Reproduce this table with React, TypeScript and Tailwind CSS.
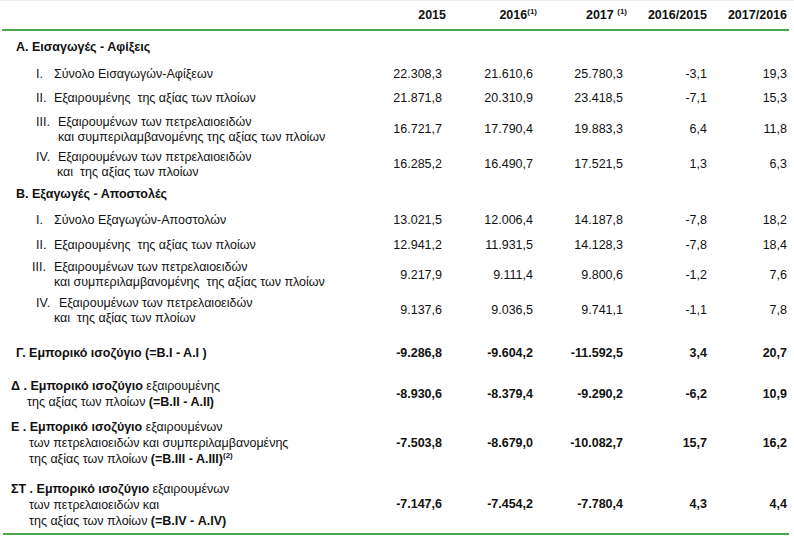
import type { ReactNode } from 'react';

type Row = {
  h: string;
  label: ReactNode;
  values?: string[];
  bold?: boolean;
};

const cols = 'grid grid-cols-[378px_66px_91px_90px_80px_80px] items-center';

function Item({ num, numW, pad, lines, line2Pad }: { num: string; numW: string; pad: string; lines: string[]; line2Pad: string }) {
  return (
    <div className={`${pad} leading-[15px]`}>
      <div className="flex whitespace-pre">
        <span className={numW}>{num}</span>
        <span>{lines[0]}</span>
      </div>
      {lines.slice(1).map((l) => (
        <div key={l} className={`${line2Pad} whitespace-pre`}>{l}</div>
      ))}
    </div>
  );
}

const rows: Row[] = [
  { h: 'h-[32px]', label: <div className="pl-[14px] font-bold">Α. Εισαγωγές - Αφίξεις</div> },
  {
    h: 'h-[22px]',
    label: <Item num="I." numW="w-[18px]" pad="pl-[34px]" lines={['Σύνολο Εισαγωγών-Αφίξεων']} line2Pad="" />,
    values: ['22.308,3', '21.610,6', '25.780,3', '-3,1', '19,3'],
  },
  {
    h: 'h-[26px]',
    label: <Item num="II." numW="w-[18px]" pad="pl-[34px]" lines={['Εξαιρουμένης  της αξίας των πλοίων']} line2Pad="" />,
    values: ['21.871,8', '20.310,9', '23.418,5', '-7,1', '15,3'],
  },
  {
    h: 'h-[37px]',
    label: (
      <Item
        num="III."
        numW="w-[22px]"
        pad="pl-[34px]"
        lines={['Εξαιρουμένων των πετρελαιοειδών', 'και συμπεριλαμβανομένης της αξίας των πλοίων']}
        line2Pad="pl-[22px]"
      />
    ),
    values: ['16.721,7', '17.790,4', '19.883,3', '6,4', '11,8'],
  },
  {
    h: 'h-[33px]',
    label: (
      <Item
        num="IV."
        numW="w-[22px]"
        pad="pl-[34px]"
        lines={['Εξαιρουμένων των πετρελαιοειδών', 'και  της αξίας των πλοίων']}
        line2Pad="pl-[21px]"
      />
    ),
    values: ['16.285,2', '16.490,7', '17.521,5', '1,3', '6,3'],
  },
  { h: 'h-[26px]', label: <div className="pl-[14px] font-bold">Β. Εξαγωγές - Αποστολές</div> },
  {
    h: 'h-[26px]',
    label: <Item num="I." numW="w-[18px]" pad="pl-[34px]" lines={['Σύνολο Εξαγωγών-Αποστολών']} line2Pad="" />,
    values: ['13.021,5', '12.006,4', '14.187,8', '-7,8', '18,2'],
  },
  {
    h: 'h-[24px]',
    label: <Item num="II." numW="w-[18px]" pad="pl-[34px]" lines={['Εξαιρουμένης  της αξίας των πλοίων']} line2Pad="" />,
    values: ['12.941,2', '11.931,5', '14.128,3', '-7,8', '18,4'],
  },
  {
    h: 'h-[36px]',
    label: (
      <Item
        num="III."
        numW="w-[22px]"
        pad="pl-[30px]"
        lines={['Εξαιρουμένων των πετρελαιοειδών', 'και συμπεριλαμβανομένης  της αξίας των πλοίων']}
        line2Pad="pl-[22px]"
      />
    ),
    values: ['9.217,9', '9.111,4', '9.800,6', '-1,2', '7,6'],
  },
  {
    h: 'h-[35px]',
    label: (
      <Item
        num="IV."
        numW="w-[23px]"
        pad="pl-[34px]"
        lines={['Εξαιρουμένων των πετρελαιοειδών', 'και  της αξίας των πλοίων']}
        line2Pad="pl-[18px]"
      />
    ),
    values: ['9.137,6', '9.036,5', '9.741,1', '-1,1', '7,8'],
  },
  {
    h: 'h-[50px]',
    bold: true,
    label: <div className="pl-[14px] font-bold whitespace-pre">Γ. Εμπορικό ισοζύγιο (=Β.Ι - Α.Ι )</div>,
    values: ['-9.286,8', '-9.604,2', '-11.592,5', '3,4', '20,7'],
  },
  {
    h: 'h-[32px]',
    bold: true,
    label: (
      <div className="pl-[9px] leading-[16px]">
        <div>
          <span className="font-bold">Δ . Εμπορικό ισοζύγιο</span> εξαιρουμένης
        </div>
        <div className="pl-[16px]">
          της αξίας των πλοίων <span className="font-bold">(=Β.ΙΙ - Α.ΙΙ)</span>
        </div>
      </div>
    ),
    values: ['-8.930,6', '-8.379,4', '-9.290,2', '-6,2', '10,9'],
  },
  {
    h: 'h-[66px]',
    bold: true,
    label: (
      <div className="pl-[9px] leading-[16px]">
        <div>
          <span className="font-bold">Ε . Εμπορικό ισοζύγιο</span> εξαιρουμένων
        </div>
        <div className="pl-[18px]">των πετρελαιοειδών και συμπεριλαμβανομένης</div>
        <div className="pl-[18px]">
          της αξίας των πλοίων <span className="font-bold">(=Β.ΙΙΙ - Α.ΙΙΙ)</span>
          <sup className="font-bold text-[8px] -top-[5px]">(2)</sup>
        </div>
      </div>
    ),
    values: ['-7.503,8', '-8.679,0', '-10.082,7', '15,7', '16,2'],
  },
  {
    h: 'h-[57px]',
    bold: true,
    label: (
      <div className="pl-[9px] leading-[16px]">
        <div>
          <span className="font-bold">ΣΤ . Εμπορικό ισοζύγιο</span> εξαιρουμένων
        </div>
        <div className="pl-[18px]">των πετρελαιοειδών και</div>
        <div className="pl-[18px]">
          της αξίας των πλοίων <span className="font-bold">(=Β.ΙV - Α.ΙV)</span>
        </div>
      </div>
    ),
    values: ['-7.147,6', '-7.454,2', '-7.780,4', '4,3', '4,4'],
  },
];

export default function App() {
  return (
    <div className="w-[794px] h-[544px] bg-white text-[#111] text-[12.5px] font-['Liberation_Sans',Arial,sans-serif] overflow-hidden">
      <div className="h-[1px] bg-[#f1f1f1]" />
      <div className="ml-[2px] w-[785px]">
        {/* Header */}
        <div className={`${cols} h-[28px] font-bold`}>
          <div />
          <div className="text-right">2015</div>
          <div className="text-right">
            2016<sup className="text-[8px] -top-[5px]">(1)</sup>
          </div>
          <div className="text-right">
            2017 <sup className="text-[8px] -top-[5px]">(1)</sup>
          </div>
          <div className="text-right">2016/2015</div>
          <div className="text-right">2017/2016</div>
        </div>
      </div>
      <div className="ml-[2px] w-[787px] h-[2px] bg-[#4fa84b]" />
      <div className="ml-[2px] w-[785px]">
        {rows.map((r, i) => (
          <div key={i} className={`${cols} ${r.h}`}>
            {r.label}
            {r.values ? (
              r.values.map((v, j) => (
                <div key={j} className={`text-right ${j < 3 ? 'pr-[4px]' : ''} ${r.bold ? 'font-bold' : ''}`}>
                  {v}
                </div>
              ))
            ) : null}
          </div>
        ))}
      </div>
      <div className="ml-[3px] w-[786px] h-[2px] bg-[#4fa84b]" />
    </div>
  );
}
